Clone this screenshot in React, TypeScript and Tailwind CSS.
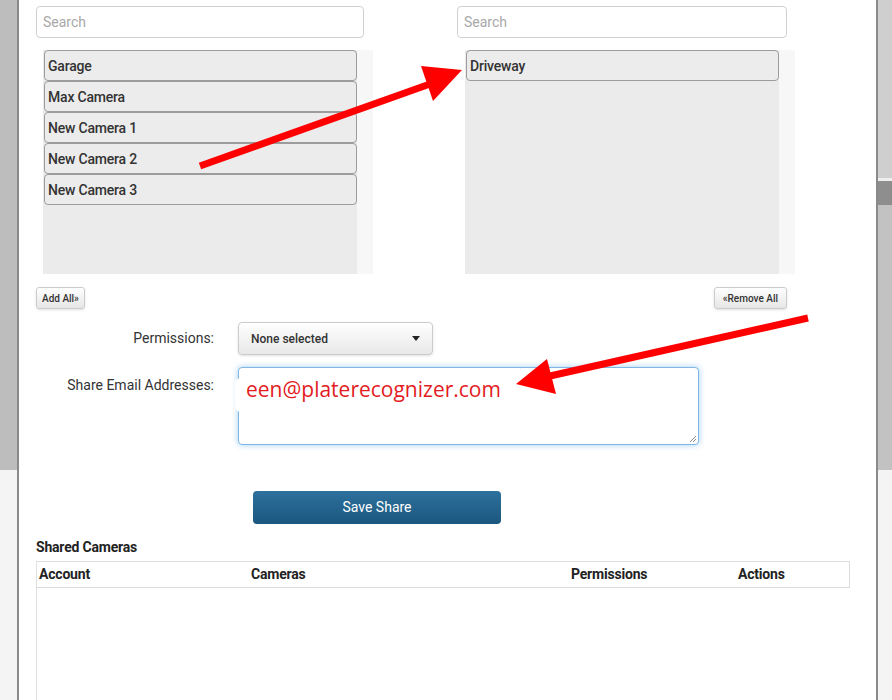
import React from "react";

const LEFT_CAMERAS = ["Garage", "Max Camera", "New Camera 1", "New Camera 2", "New Camera 3"];
const RIGHT_CAMERAS = ["Driveway"];

function CameraList({ items }: { items: string[] }) {
  return (
    <div className="flex h-[224px] w-[330px]">
      <div className="flex w-[314px] flex-col bg-[#ebebeb]">
        {items.map((name) => (
          <div
            key={name}
            className="ml-px flex h-[31px] w-[313px] items-center rounded-[4px] border border-[#9c9c9c] bg-[#ececec] px-[3px] pt-[1px] text-[14px] font-medium tracking-[-0.2px] text-[#333]"
          >
            {name}
          </div>
        ))}
      </div>
      <div className="flex-1 bg-[#f7f7f7]" />
    </div>
  );
}

function SearchBox({ width }: { width: string }) {
  return (
    <input
      type="text"
      placeholder="Search"
      className={`${width} h-[32px] rounded-[4px] border border-[#d0d0d0] bg-white px-[6px] text-[14px] text-[#333] outline-none placeholder:text-[#a8a8a8]`}
    />
  );
}

function Arrows() {
  return (
    <svg className="pointer-events-none absolute left-0 top-0" width="892" height="700">
      <line x1="200" y1="166" x2="430" y2="84" stroke="#ff0000" strokeWidth="7" />
      <polygon points="421,66 462,70 433,101" fill="#ff0000" />
      <line x1="808" y1="318" x2="550" y2="376" stroke="#ff0000" strokeWidth="7" />
      <polygon points="547,359 516,384 556,394" fill="#ff0000" />
    </svg>
  );
}

export default function App() {
  return (
    <div
      className="relative flex h-[700px] w-[892px] overflow-hidden bg-white"
      style={{ fontFamily: "Roboto, 'Liberation Sans', sans-serif" }}
    >
      {/* backdrop left */}
      <div className="flex w-[19px] flex-col border-r-2 border-[#8a8a8a]">
        <div className="h-[470px] bg-[#bdbdbd]" />
        <div className="flex-1 bg-[#f4f4f4]" />
      </div>

      {/* modal body */}
      <div className="flex flex-1 flex-col pl-[17px] pt-[6px]">
        <div className="flex">
          <div className="flex w-[337px] flex-col">
            <SearchBox width="w-[328px]" />
            <div className="ml-[7px] mt-[12px]">
              <CameraList items={LEFT_CAMERAS} />
            </div>
          </div>
          <div className="ml-[84px] flex w-[338px] flex-col">
            <SearchBox width="w-[330px]" />
            <div className="ml-[8px] mt-[12px]">
              <CameraList items={RIGHT_CAMERAS} />
            </div>
          </div>
        </div>

        <div className="mt-[13px] flex w-[751px] justify-between">
          <button className="h-[22px] rounded-[3px] border border-[#ccc] bg-gradient-to-b from-white to-[#e6e6e6] px-[5px] text-[10px] font-medium text-[#333] shadow-sm">
            Add All»
          </button>
          <button className="h-[22px] rounded-[3px] border border-[#ccc] bg-gradient-to-b from-white to-[#e6e6e6] px-[8px] text-[10px] font-medium text-[#333] shadow-sm">
            «Remove All
          </button>
        </div>

        <div className="mt-[13px] flex items-center">
          <div className="w-[178px] text-right text-[14px] text-[#333]">Permissions:</div>
          <button className="ml-[24px] flex h-[33px] w-[195px] items-center justify-between rounded-[4px] border border-[#ccc] bg-gradient-to-b from-white to-[#e8e8e8] pl-[12px] pr-[12px] text-[12px] font-medium text-[#333] shadow-sm">
            <span>None selected</span>
            <span className="h-0 w-0 border-x-[4px] border-t-[5px] border-x-transparent border-t-[#222]" />
          </button>
        </div>

        <div className="mt-[12px] flex items-start">
          <div className="w-[178px] pt-[8px] text-right text-[14px] text-[#333]">Share Email Addresses:</div>
          <div className="relative ml-[24px] h-[78px] w-[461px] rounded-[4px] border border-[#7fb6e6] bg-white shadow-[0_0_6px_rgba(102,175,233,0.6)]">
            <div className="absolute left-[-4px] top-[10px] h-[34px] w-[12px] rounded-full bg-white" />
            <div
              className="absolute left-[7px] top-[7px] text-[21px] leading-[28px] text-[#e31b23]"
              style={{ fontFamily: "'Open Sans', sans-serif" }}
            >
              een@platerecognizer.com
            </div>
            <svg className="absolute bottom-[1px] right-[1px]" width="8" height="8">
              <line x1="1" y1="7" x2="7" y2="1" stroke="#888" strokeWidth="1" />
              <line x1="4" y1="7" x2="7" y2="4" stroke="#888" strokeWidth="1" />
            </svg>
          </div>
        </div>

        <button className="ml-[217px] mt-[46px] h-[33px] w-[248px] rounded-[4px] bg-gradient-to-b from-[#2d719d] to-[#1b577e] text-[14px] text-white">
          Save Share
        </button>

        <div className="mt-[13px] text-[14px] font-bold tracking-[-0.2px] text-[#222]">Shared Cameras</div>
        <div className="mt-[3px] flex w-[814px] flex-1 flex-col border-l border-[#e0e0e0]">
          <div className="flex h-[27px] items-center border border-l-0 border-[#dcdcdc] text-[14px] font-bold tracking-[-0.2px] text-[#222]">
            <div className="w-[214px] pl-[2px]">Account</div>
            <div className="w-[320px]">Cameras</div>
            <div className="w-[167px]">Permissions</div>
            <div>Actions</div>
          </div>
          <div className="flex-1" />
        </div>
      </div>

      {/* backdrop right */}
      <div className="flex w-[16px] flex-col border-l-2 border-[#8a8a8a]">
        <div className="h-[178px] bg-[#cfcfcf]" />
        <div className="h-[3px] bg-[#eeeeee]" />
        <div className="h-[24px] bg-[#8e8e8e]" />
        <div className="h-[265px] bg-[#c2c2c2]" />
        <div className="flex-1 bg-[#f4f4f4]" />
      </div>

      <Arrows />
    </div>
  );
}
